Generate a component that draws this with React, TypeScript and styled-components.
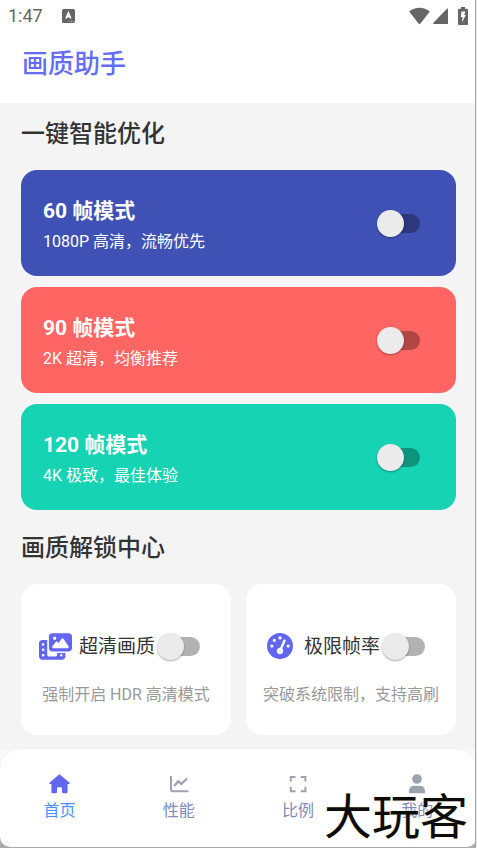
import React from "react";
import styled, { createGlobalStyle } from "styled-components";
import { FaPhotoFilm, FaGaugeHigh } from "react-icons/fa6";

const GlobalStyle = createGlobalStyle`
  *, *::before, *::after { box-sizing: border-box; }
  body {
    margin: 0;
    background: #f4f4f4;
    font-family: Roboto, "Noto Sans CJK SC", sans-serif;
    color: #333333;
  }
  h1, h2, h3, p { margin: 0; }
`;

const Screen = styled.div`
  position: relative;
  display: flex;
  flex-direction: column;
  min-height: 100vh;
  overflow: hidden;
`;

const Header = styled.header`
  background: #ffffff;
  padding-bottom: 21px;
`;

const StatusBar = styled.div`
  display: flex;
  align-items: center;
  height: 32px;
  padding: 0 9px 0 8px;
  color: #666666;
`;

const Clock = styled.time`
  font-size: 18px;
  font-weight: 400;
  line-height: 32px;
  margin-right: 19px;
`;

const StatusIcons = styled.div`
  display: flex;
  align-items: center;
  margin-left: auto;
`;

const AppTitle = styled.h1`
  padding: 14px 22px 0;
  font-size: 26px;
  line-height: 36px;
  font-weight: 500;
  color: #666cf8;
`;

const Main = styled.main`
  flex: 1;
  padding: 14px 21px;
`;

const SectionTitle = styled.h2`
  font-size: 24px;
  line-height: 34px;
  font-weight: 500;
  margin-bottom: 19px;
`;

const ModeList = styled.div`
  display: flex;
  flex-direction: column;
  gap: 11px;
  margin-bottom: 21px;
`;

const ModeCard = styled.label<{ $color: string }>`
  display: flex;
  align-items: center;
  justify-content: space-between;
  padding: 0 21px 0 22px;
  border-radius: 16px;
  background: ${(p) => p.$color};
  color: #ffffff;
`;

const ModeText = styled.div`
  padding: 27px 0 22px;
`;

const ModeName = styled.h3`
  font-size: 21px;
  line-height: 28px;
  font-weight: 700;
  margin-bottom: 5px;
`;

const ModeNote = styled.p`
  font-size: 16px;
  line-height: 24px;
`;

const Toggle = styled.input`
  appearance: none;
  position: relative;
  flex: none;
  width: 43px;
  height: 27px;
  margin: 0 15px 0 0;
  cursor: pointer;

  &::before {
    content: "";
    position: absolute;
    inset: 4px 0 4px 4px;
    border-radius: 10px;
    background: rgba(0, 0, 0, 0.3);
  }
  &::after {
    content: "";
    position: absolute;
    top: 0;
    left: 0;
    width: 27px;
    height: 27px;
    border-radius: 50%;
    background: #ebebeb;
    box-shadow: 0 1px 2px rgba(0, 0, 0, 0.35);
  }
  &:checked::after {
    left: 16px;
  }
`;

const UnlockGrid = styled.div`
  display: grid;
  grid-template-columns: 1fr 1fr;
  gap: 15px;
`;

const UnlockCard = styled.label`
  display: flex;
  flex-direction: column;
  align-items: center;
  padding: 47px 0 28px;
  border-radius: 16px;
  background: #ffffff;
`;

const UnlockRow = styled.div`
  display: flex;
  align-items: center;
  height: 30px;
  padding-left: 2px;
  margin-bottom: 22px;
`;

const UnlockIcon = styled.span`
  display: flex;
  justify-content: center;
  width: 33px;
  margin-right: 7px;
  color: #6366f1;
`;

const UnlockName = styled.h3`
  padding-top: 2px;
  font-size: 19px;
  line-height: 28px;
  font-weight: 400;
  white-space: nowrap;
  margin-right: 2px;
`;

const UnlockNote = styled.p`
  font-size: 16px;
  line-height: 24px;
  color: #999999;
  white-space: nowrap;
`;

const NavBar = styled.nav`
  display: grid;
  grid-template-columns: repeat(4, 1fr);
  padding: 25px 0 24px;
  border-radius: 20px 20px 10px 10px;
  background: #ffffff;
  box-shadow: 0 0 1px rgba(0, 0, 0, 0.15);
`;

const NavItem = styled.a<{ $active?: boolean }>`
  display: flex;
  flex-direction: column;
  align-items: center;
  gap: 5px;
  font-size: 16px;
  line-height: 24px;
  text-decoration: none;
  color: ${(p) => (p.$active ? "#4a90ff" : "#7d8cb9")};

  svg {
    color: ${(p) => (p.$active ? "#6366f1" : "#9ca3af")};
  }
`;

const NavFrame = styled.div`
  padding-bottom: 1px;
  background: linear-gradient(#f9f9f9 50%, #aaaaaa 50%);
`;

const WindowEdge = styled.div`
  position: absolute;
  top: 0;
  right: 0;
  bottom: 0;
  width: 2px;
  border-left: 1px solid #a8a8a8;
  background: #e8e8e8;
`;

const Watermark = styled.div`
  position: absolute;
  right: 9px;
  bottom: 8px;
  font-family: "Noto Sans CJK SC", sans-serif;
  font-size: 48px;
  line-height: 54px;
  font-weight: 400;
  color: #0c0c0c;
  text-shadow: 0 0 2px #e6dfb8;
  pointer-events: none;
`;

const KeyboardIcon = () => (
  <svg width="13" height="14" viewBox="0 0 13 14" aria-hidden="true">
    <rect width="13" height="14" rx="1.5" fill="currentColor" />
    <path d="M4 9.500 6.400 4 8.800 9.500M4.800 7.700h3.200" fill="none" stroke="#fff" strokeWidth="1.700" />
    <path d="M7 12.300h1M9 12.300h1M11 12.300h1" stroke="#bbb" strokeWidth="1" />
  </svg>
);

const WifiIcon = () => (
  <svg width="21" height="18" viewBox="0 0 21 18" aria-hidden="true">
    <path d="M.2 4.400C6.200-.4 14.800-.4 20.800 4.400L11.300 16.800Q10.500 17.600 9.700 16.800Z" fill="currentColor" />
  </svg>
);

const SignalIcon = () => (
  <svg width="15" height="16" viewBox="0 0 15 16" aria-hidden="true">
    <path d="M15 .8V16H.8Q-.4 15.400.4 14.700L13.900.8Q14.600.2 15 .8Z" fill="currentColor" />
  </svg>
);

const BatteryIcon = () => (
  <svg width="10" height="18" viewBox="0 0 10 18" aria-hidden="true">
    <path d="M3 0h4v1.800h2q1 0 1 1V17q0 1-1 1H1q-1 0-1-1V2.800q0-1 1-1h2Z" fill="currentColor" />
    <path d="M3.500 4.500h3.800L6.300 8h1.500L4 15.500 4.600 10H2.700Z" fill="#fff" />
  </svg>
);

const HomeIcon = () => (
  <svg width="21" height="20" viewBox="0 0 21 20" aria-hidden="true">
    <path
      d="M9.800.8Q10.500.2 11.200.8L20.600 8.800Q21 9.500 20.300 10H18.600V18Q18.600 19.200 17.400 19.200H14.200Q13 19.200 13 18V14.500Q13 13.200 11.800 13.200H9.200Q8 13.200 8 14.500V18Q8 19.200 6.800 19.200H3.600Q2.400 19.200 2.400 18V10H.7Q0 9.500.4 8.800Z"
      fill="currentColor"
    />
  </svg>
);

const ChartIcon = () => (
  <svg width="20" height="20" viewBox="0 0 20 20" fill="none" stroke="currentColor" strokeWidth="2" aria-hidden="true">
    <path d="M2 2V15.500Q2 17.200 3.700 17.200H19.500" />
    <path d="M5.300 12 9.300 7.200 12.200 10 18.200 4.500" strokeWidth="2.300" />
  </svg>
);

const FrameIcon = () => (
  <svg width="18" height="20" viewBox="0 0 18 20" fill="none" stroke="currentColor" strokeWidth="2" aria-hidden="true">
    <path d="M1.800 7.500V3H6.500M11.800 3H16.400V7.500M16.400 12.700V17.200H11.800M6.500 17.200H1.800V12.700" />
  </svg>
);

const UserIcon = () => (
  <svg width="18" height="20" viewBox="0 0 18 20" fill="currentColor" aria-hidden="true">
    <circle cx="9" cy="5" r="4.800" />
    <path d="M1 19.200V17.500Q1 11.800 6.500 11.800H11.500Q17 11.800 17 17.500V19.200Z" />
  </svg>
);

const SignalSlot = styled.span`
  display: flex;
  margin: 0 10px 0 3px;
`;

const modes = [
  { name: "60 帧模式", note: "1080P 高清，流畅优先", color: "#3f51b5" },
  { name: "90 帧模式", note: "2K 超清，均衡推荐", color: "#ff6562" },
  { name: "120 帧模式", note: "4K 极致，最佳体验", color: "#15d3b3" },
];

const unlocks = [
  { name: "超清画质", note: "强制开启 HDR 高清模式", icon: <FaPhotoFilm size={33} height={26} /> },
  { name: "极限帧率", note: "突破系统限制，支持高刷", icon: <FaGaugeHigh size={26} /> },
];

const tabs = [
  { name: "首页", icon: <HomeIcon />, active: true },
  { name: "性能", icon: <ChartIcon /> },
  { name: "比例", icon: <FrameIcon /> },
  { name: "我的", icon: <UserIcon /> },
];

export default function App() {
  return (
    <Screen>
      <GlobalStyle />
      <Header>
        <StatusBar>
          <Clock>1:47</Clock>
          <KeyboardIcon />
          <StatusIcons>
            <WifiIcon />
            <SignalSlot>
              <SignalIcon />
            </SignalSlot>
            <BatteryIcon />
          </StatusIcons>
        </StatusBar>
        <AppTitle>画质助手</AppTitle>
      </Header>
      <Main>
        <SectionTitle>一键智能优化</SectionTitle>
        <ModeList>
          {modes.map((m) => (
            <ModeCard key={m.name} $color={m.color}>
              <ModeText>
                <ModeName>{m.name}</ModeName>
                <ModeNote>{m.note}</ModeNote>
              </ModeText>
              <Toggle type="checkbox" role="switch" />
            </ModeCard>
          ))}
        </ModeList>
        <SectionTitle>画质解锁中心</SectionTitle>
        <UnlockGrid>
          {unlocks.map((u) => (
            <UnlockCard key={u.name}>
              <UnlockRow>
                <UnlockIcon>{u.icon}</UnlockIcon>
                <UnlockName>{u.name}</UnlockName>
                <Toggle type="checkbox" role="switch" />
              </UnlockRow>
              <UnlockNote>{u.note}</UnlockNote>
            </UnlockCard>
          ))}
        </UnlockGrid>
      </Main>
      <NavFrame>
        <NavBar>
          {tabs.map((t) => (
            <NavItem key={t.name} href="#" $active={t.active}>
              {t.icon}
              {t.name}
            </NavItem>
          ))}
        </NavBar>
      </NavFrame>
      <WindowEdge />
      <Watermark>大玩客</Watermark>
    </Screen>
  );
}
